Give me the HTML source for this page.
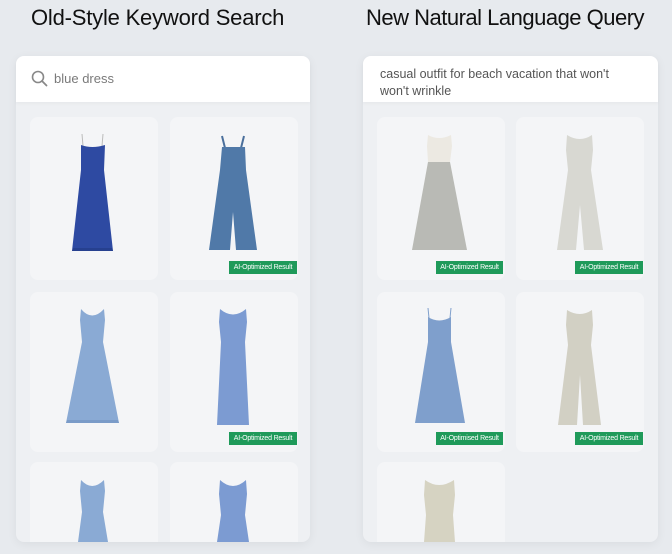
<!DOCTYPE html>
<html><head><meta charset="utf-8"><style>
*{margin:0;padding:0;box-sizing:border-box}
body{width:672px;height:554px;background:#e7eaee;font-family:"Liberation Sans",sans-serif;position:relative;overflow:hidden}
.t{position:absolute;top:5px;font-size:22px;color:#111;white-space:nowrap;letter-spacing:-0.2px}
.panel{position:absolute;top:56px;height:486px;background:#eef0f3;border-radius:8px;box-shadow:0 2px 10px rgba(0,0,0,0.06)}
.sb{position:absolute;left:0;right:0;top:0;height:46px;background:#fff;border-radius:8px 8px 0 0;box-shadow:0 2px 3px rgba(0,0,0,0.03)}
.card{position:absolute;width:128px;background:#f4f5f7;border-radius:8px}
.badge{position:absolute;height:13px;background:#1f9a5a;color:#fff;font-size:7px;line-height:13px;text-align:center;letter-spacing:-0.2px}
</style></head><body>
<div class="t" style="left:31px">Old-Style Keyword Search</div>
<div class="t" style="left:366px;letter-spacing:-0.5px">New Natural Language Query</div>

<div class="panel" style="left:16px;width:294px">
 <div class="sb">
  <svg style="position:absolute;left:15px;top:14px" width="18" height="18" viewBox="0 0 18 18"><circle cx="7" cy="7" r="5.5" fill="none" stroke="#888" stroke-width="1.6"/><line x1="11" y1="11" x2="15.5" y2="15.5" stroke="#888" stroke-width="1.8" stroke-linecap="round"/></svg>
  <div style="position:absolute;left:38px;top:15px;font-size:13px;color:#7a7a7a">blue dress</div>
 </div>
</div>
<div class="panel" style="left:363px;width:295px">
 <div class="sb">
  <div style="position:absolute;left:17px;top:10px;font-size:12.5px;color:#555;line-height:17px">casual outfit for beach vacation that won't<br>won't wrinkle</div>
 </div>
</div>

<div class="card" style="left:30px;top:117px;height:163px"></div>
<div class="card" style="left:170px;top:117px;height:163px"></div>
<div class="card" style="left:30px;top:292px;height:160px"></div>
<div class="card" style="left:170px;top:292px;height:160px"></div>
<div class="card" style="left:30px;top:462px;height:80px;border-radius:8px 8px 0 0"></div>
<div class="card" style="left:170px;top:462px;height:80px;border-radius:8px 8px 0 0"></div>
<div class="card" style="left:377px;top:117px;height:163px"></div>
<div class="card" style="left:516px;top:117px;height:163px"></div>
<div class="card" style="left:377px;top:292px;height:160px"></div>
<div class="card" style="left:516px;top:292px;height:160px"></div>
<div class="card" style="left:377px;top:462px;height:80px;border-radius:8px 8px 0 0"></div>

<svg style="position:absolute;left:0;top:0" width="672" height="554">
 <line x1="82" y1="134" x2="83" y2="146" stroke="#bbb" stroke-width="1"/><line x1="103" y1="134" x2="102" y2="146" stroke="#bbb" stroke-width="1"/>
 <path d="M81 145 Q92 149 105 145 L104 170 L113 251 L72 251 L81 170 Z" fill="#2e4aa2"/>
 <line x1="222" y1="136" x2="225" y2="148" stroke="#4a6f9c" stroke-width="2"/><line x1="244" y1="136" x2="241" y2="148" stroke="#4a6f9c" stroke-width="2"/>
 <path d="M222 147 L245 147 L246 170 L257 250 L236 250 L233 212 L230 250 L209 250 L220 170 Z" fill="#5079a8"/>
 <path d="M81 309 Q92 322 104 309 L105 320 L103 342 L119 423 L66 423 L82 342 L80 320 Z" fill="#8aaad4"/>
 <path d="M220 309 Q233 320 246 309 L247 322 L245 342 L249 425 L217 425 L221 342 L219 322 Z" fill="#7c9bd2"/>
 <path d="M81 480 Q92 492 104 480 L105 491 L103 512 L108 542 L78 542 L82 512 L80 491 Z" fill="#8aaad4"/>
 <path d="M220 480 Q233 492 246 480 L247 494 L245 515 L249 542 L217 542 L221 515 L219 494 Z" fill="#7c9bd2"/>
 <path d="M428 135 Q439 141 451 135 L452 146 L450 162 L428 162 L427 146 Z" fill="#ece9e2"/>
 <path d="M428 162 L450 162 L467 250 L412 250 Z" fill="#b9bab5"/>
 <path d="M567 135 Q580 143 592 135 L593 150 L591 170 L603 250 L584 250 L580 205 L576 250 L557 250 L568 170 L566 150 Z" fill="#d8d8d2"/>
 <line x1="428" y1="308" x2="429" y2="318" stroke="#7f9fcc" stroke-width="1"/><line x1="451" y1="308" x2="450" y2="318" stroke="#7f9fcc" stroke-width="1"/>
 <path d="M428 317 Q439 324 451 317 L451 342 L465 423 L415 423 L428 342 Z" fill="#7f9fcc"/>
 <path d="M567 310 Q580 318 592 310 L593 325 L591 345 L601 425 L583 425 L580 375 L577 425 L558 425 L568 345 L566 325 Z" fill="#d2d0c4"/>
 <path d="M425 480 Q439 490 454 480 L455 495 L453 515 L455 542 L424 542 L426 515 L424 495 Z" fill="#d6d3c2"/>
 <path d="M72 251 L113 251 L112 248 L73 248 Z" fill="#26408f"/>
 <path d="M66 423 L119 423 L118 420 L67 420 Z" fill="#7a9bc8"/>
</svg>

<div class="badge" style="left:229px;top:261px;width:68px">AI-Optimized Result</div>
<div class="badge" style="left:436px;top:261px;width:67px">AI-Optimized Result</div>
<div class="badge" style="left:575px;top:261px;width:68px">AI-Optimized Result</div>
<div class="badge" style="left:229px;top:432px;width:68px">AI-Optimized Result</div>
<div class="badge" style="left:436px;top:432px;width:67px">AI-Optimised Result</div>
<div class="badge" style="left:575px;top:432px;width:68px">AI-Optimized Result</div>
</body></html>
